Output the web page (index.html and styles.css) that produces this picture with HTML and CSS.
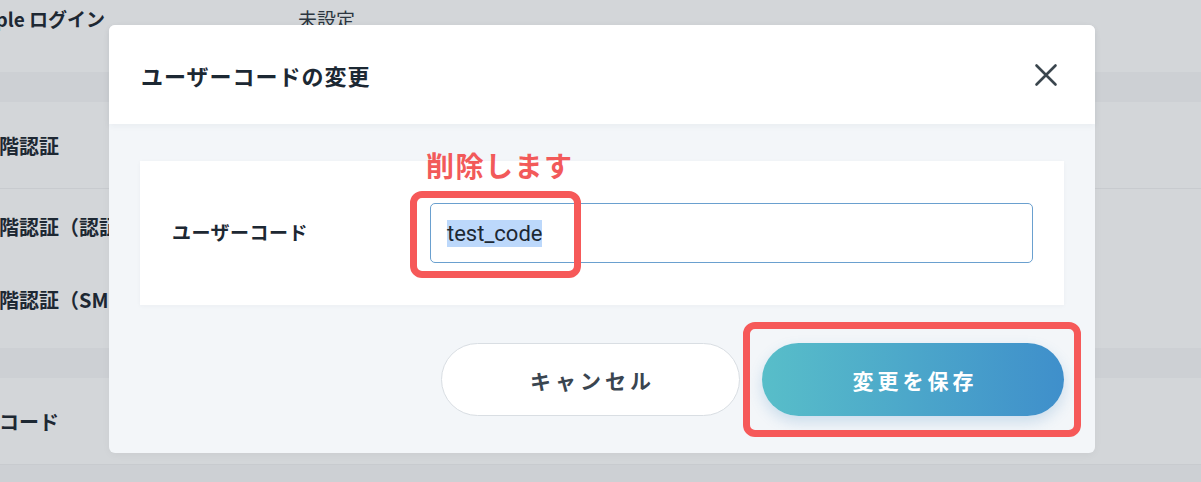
FILE: index.html
```html
<!DOCTYPE html>
<html lang="ja">
<head>
  <meta charset="UTF-8">
  <meta name="viewport" content="width=device-width, initial-scale=1.0">
  <title>ユーザーコードの変更</title>
  <link rel="stylesheet" href="styles.css">
</head>
<body>
  <!-- page behind the dialog -->
  <div class="page">
    <div class="section">
      <div class="row row-top">
        <span class="row-label row-label-apple">Apple ログイン</span>
        <span class="row-value">未設定</span>
      </div>
    </div>
    <div class="band"></div>
    <div class="section">
      <div class="row row-head">
        <span class="row-label">二段階認証</span>
      </div>
      <div class="row row-sub">
        <span class="row-label">二段階認証（認証アプリ）</span>
      </div>
      <div class="row row-sub-last">
        <span class="row-label">二段階認証（SMS）</span>
      </div>
    </div>
    <div class="band"></div>
    <div class="section">
      <div class="row row-head">
        <span class="row-label">認証コード</span>
      </div>
    </div>
    <div class="band band-end"></div>
  </div>

  <div class="modal">
    <div class="modal-header">
      <h1 class="modal-title">ユーザーコードの変更</h1>
      <button class="close-btn" aria-label="閉じる">
        <svg width="24" height="24" viewBox="0 0 24 24">
          <path d="M2.5 2.5 L21.5 21.5 M21.5 2.5 L2.5 21.5" stroke="#3b464e" stroke-width="2.6" stroke-linecap="round" fill="none"/>
        </svg>
      </button>
    </div>

    <div class="modal-body">
      <div class="card">
        <label class="field-label">ユーザーコード</label>
        <div class="field-input"><span class="selected">test_code</span></div>
      </div>

      <div class="actions">
        <button class="btn btn-cancel">キャンセル</button>
        <button class="btn btn-save">変更を保存</button>
      </div>
    </div>

    <!-- annotations -->
    <div class="note">削除します</div>
    <div class="mark mark-input"></div>
    <div class="mark mark-save"></div>
  </div>
</body>
</html>
```

FILE: styles.css
```css
* {
  box-sizing: border-box;
  margin: 0;
  padding: 0;
}

body {
  font-family: "Noto Sans CJK JP", "Noto Sans", sans-serif;
  background: #d3d6d9;
  color: #1d2833;
  width: 1201px;
  height: 482px;
  overflow: hidden;
  position: relative;
}

/* background page */
.page {
  margin-left: -41px;
}

.section {
  background: #d3d6d9;
}

.row {
  display: flex;
  align-items: center;
  font-size: 20px;
  font-weight: 700;
}

/* labels sit under the dialog past x=109, so clip them there */
.row-label {
  width: 150px;
  margin-right: 189px;
  white-space: nowrap;
  overflow: hidden;
}

.row-label-apple {
  padding-left: 12px;
  font-size: 19px;
}

.row-value {
  font-weight: 400;
  font-size: 19px;
  color: #2c3640;
}

.row-top {
  height: 72px;
  align-items: flex-start;
  padding-top: 5px;
}

.row-head {
  height: 87px;
  border-bottom: 1px solid #c8cbcf;
}

.row-sub {
  height: 74px;
}

.row-sub-last {
  height: 85px;
  padding-bottom: 12px;
}

.band {
  height: 30px;
  background: #cdd0d4;
}

.band-end {
  height: 40px;
}

/* dialog */
.modal {
  position: absolute;
  left: 109px;
  top: 25px;
  width: 986px;
  height: 428px;
  border-radius: 6px;
  background: #f3f6f9;
  box-shadow: 0 2px 8px rgba(0, 0, 0, 0.04);
}

.modal-header {
  height: 99px;
  background: #fff;
  border-radius: 6px 6px 0 0;
  display: flex;
  align-items: center;
  justify-content: space-between;
  padding: 0 37px 0 32px;
  box-shadow: 0 2px 6px rgba(40, 60, 80, 0.05);
  position: relative;
}

.modal-title {
  font-size: 22px;
  font-weight: 700;
  color: #1c2833;
  letter-spacing: 1px;
}

.close-btn {
  border: 0;
  background: none;
  width: 24px;
  height: 24px;
  display: flex;
}

.modal-body {
  padding: 37px 31px 37px;
}

.card {
  height: 144px;
  background: #fff;
  display: flex;
  align-items: center;
  padding: 0 31px 0 32px;
  box-shadow: 0 1px 4px rgba(40, 60, 80, 0.04);
}

.field-label {
  width: 258px;
  font-size: 19px;
  font-weight: 700;
  color: #1d2833;
  letter-spacing: 0.5px;
  margin-top: -4px;
}

.field-input {
  flex: 1;
  height: 60px;
  border: 1.5px solid #6aa0cf;
  border-radius: 5px;
  display: flex;
  align-items: center;
  padding-left: 16px;
  font-family: Roboto, "Noto Sans", sans-serif;
  font-size: 22px;
  color: #1d2833;
}

.selected {
  background: #bcd8fb;
  line-height: 27px;
}

.actions {
  margin-top: 38px;
  display: flex;
  justify-content: flex-end;
  gap: 22px;
}

.btn {
  height: 73px;
  border-radius: 37px;
  font-family: "Noto Sans CJK JP", sans-serif;
  font-size: 21px;
  font-weight: 700;
  letter-spacing: 4px;
  padding-left: 4px;
}

.btn-cancel {
  width: 299px;
  background: #fff;
  border: 1.5px solid #d9dee3;
  color: #3a4550;
}

.btn-save {
  width: 302px;
  border: 0;
  color: #fff;
  background: linear-gradient(90deg, #58bec9 0%, #3f8fcb 100%);
  box-shadow: 0 6px 14px rgba(60, 130, 190, 0.22);
}

/* annotations */
.note {
  position: absolute;
  left: 317px;
  top: 123px;
  font-size: 28px;
  line-height: 34px;
  font-weight: 700;
  letter-spacing: 1.5px;
  color: #f25a5a;
}

.mark {
  position: absolute;
  border: 7px solid #f65959;
  border-radius: 12px;
}

.mark-input {
  left: 301px;
  top: 166px;
  width: 171px;
  height: 87px;
}

.mark-save {
  left: 634px;
  top: 297px;
  width: 338px;
  height: 115px;
}
```
